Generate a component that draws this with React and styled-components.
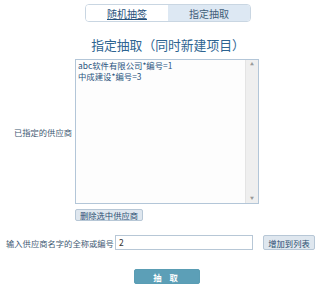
import React from "react";
import styled, { createGlobalStyle } from "styled-components";

const font = `"Noto Sans CJK SC", "Noto Sans", sans-serif`;

const Global = createGlobalStyle`
    body {
        margin: 0;
        background: #ffffff;
        font-family: ${font};
    }
`;

const Page = styled.div`
    width: 320px;
    height: 292px;
    overflow: hidden;
    padding-top: 4px;
    box-sizing: border-box;
`;

const Centered = styled.div`
    display: flex;
    flex-direction: column;
    align-items: center;
    padding-left: 16px;
`;

const Tabs = styled.div`
    display: flex;
    width: 166px;
    height: 18px;
    border: 1px solid #c9d6e2;
    border-radius: 4px;
    overflow: hidden;
    box-sizing: border-box;
`;

const Tab = styled.div`
    flex: 1;
    display: flex;
    align-items: center;
    justify-content: center;
    font-size: 10px;
    color: ${p => p.active ? "#3f5d78" : "#27507a"};
    background: ${p => p.active ? "#dde8f3" : "#ffffff"};
    text-decoration: ${p => p.active ? "none" : "underline"};
`;

const Title = styled.div`
    margin-top: 14px;
    font-size: 12.8px;
    line-height: 18px;
    color: #2d6491;
`;

const Row = styled.div`
    display: flex;
    align-items: ${p => p.center ? "center" : "flex-start"};
    margin-top: ${p => p.gap || 0}px;
`;

const Label = styled.div`
    width: ${p => p.width}px;
    padding-left: ${p => p.left || 0}px;
    box-sizing: border-box;
    text-align: ${p => p.align || "right"};
    padding-right: ${p => p.right || 0}px;
    font-size: 8.3px;
    color: #3f5a74;
    white-space: nowrap;
    align-self: center;
`;

const Box = styled.div`
    display: flex;
    width: 184px;
    height: 145px;
    border: 1px solid #b3c6d8;
    box-sizing: border-box;
    background: #fdfdfd;
`;

const BoxText = styled.div`
    flex: 1;
    padding: 0 2px;
    font-size: 8.4px;
    line-height: 11px;
    color: #2a5480;
`;

const Scroll = styled.div`
    width: 12px;
    background: #efefef;
    border-left: 1px solid #e4e4e4;
    display: flex;
    flex-direction: column;
    justify-content: space-between;
    align-items: center;
    font-size: 4px;
    color: #9a9a9a;
    line-height: 9px;
`;

const Button = styled.div`
    display: flex;
    align-items: center;
    justify-content: center;
    height: ${p => p.h}px;
    width: ${p => p.w}px;
    margin-left: ${p => p.ml || 0}px;
    box-sizing: border-box;
    font-size: 8.3px;
    border-radius: 2px;
    border: 1px solid ${p => p.primary ? "#5a9db4" : "#b7c7d6"};
    background: ${p => p.primary ? "#5c9fb7" : "#dfe7ef"};
    color: ${p => p.primary ? "#ffffff" : "#2b4f72"};
    font-weight: ${p => p.primary ? "bold" : "normal"};
    letter-spacing: ${p => p.primary ? "3px" : "0"};
`;

const Input = styled.div`
    width: 138px;
    height: 15px;
    border: 1px solid #b7c7d6;
    box-sizing: border-box;
    font-size: 8.5px;
    line-height: 13px;
    padding-left: 3px;
    color: #333;
    background: #fff;
`;

const Footer = styled.div`
    display: flex;
    justify-content: center;
    padding-left: 14px;
    margin-top: 19px;
`;

export default function App() {
    return (
        <Page>
            <Global />
            <Centered>
                <Tabs>
                    <Tab>随机抽签</Tab>
                    <Tab active>指定抽取</Tab>
                </Tabs>
                <Title>指定抽取（同时新建项目）</Title>
            </Centered>
            <Row gap={5}>
                <Label width={75} right={3}>已指定的供应商</Label>
                <Box>
                    <BoxText>
                        abc软件有限公司*编号=1<br />
                        中成建设*编号=3
                    </BoxText>
                    <Scroll>
                        <span>▲</span>
                        <span>▼</span>
                    </Scroll>
                </Box>
            </Row>
            <Row gap={5}>
                <Label width={75} />
                <Button w={68} h={12}>删除选中供应商</Button>
            </Row>
            <Row gap={14} center>
                <Label width={115} left={6} align="left">输入供应商名字的全称或编号</Label>
                <Input>2</Input>
                <Button w={52} h={15} ml={10}>增加到列表</Button>
            </Row>
            <Footer>
                <Button primary w={66} h={15}>抽 取</Button>
            </Footer>
        </Page>
    );
}
